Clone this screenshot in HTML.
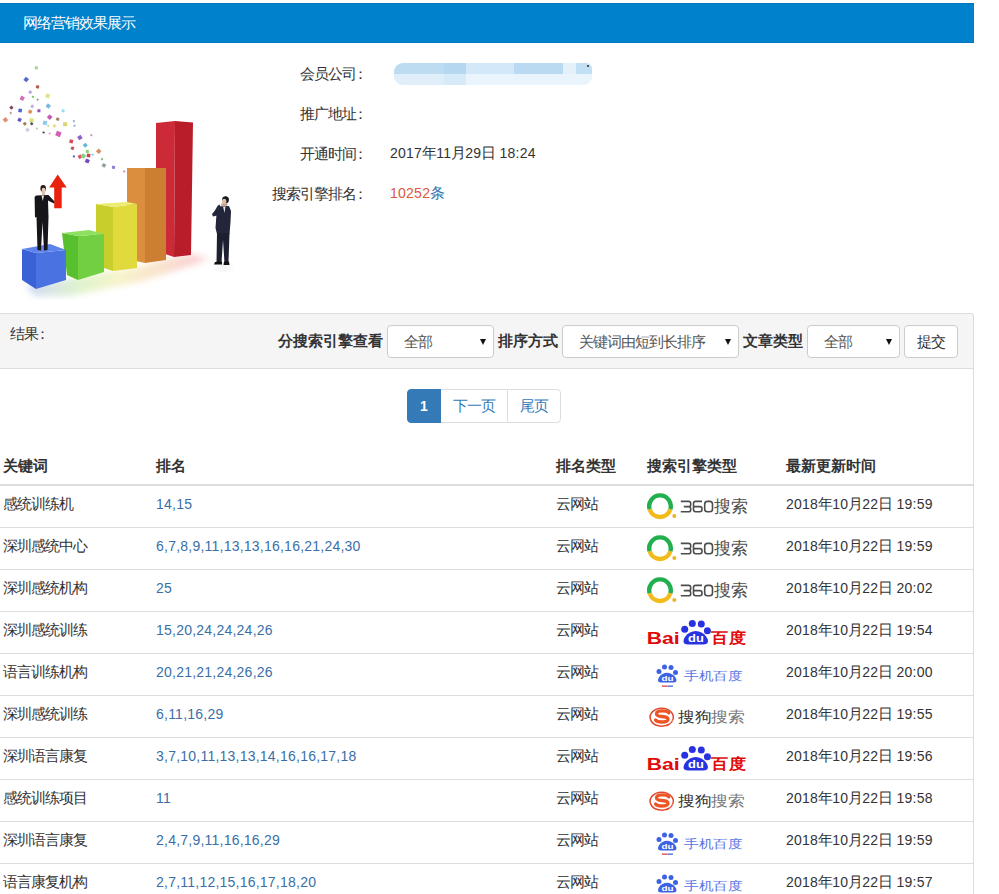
<!DOCTYPE html>
<html><head><meta charset="utf-8"><style>
*{box-sizing:border-box}
html,body{margin:0;padding:0;background:#fff;width:999px;height:894px;overflow:hidden;position:relative;font-family:"Liberation Sans",sans-serif;font-size:14px;color:#333}
.abs{position:absolute}
.hdr{position:absolute;left:0;top:3px;width:974px;height:40px;background:#0081cc;border-top:1px solid #0676bd;border-bottom:1px solid #0676bd;color:#fff;font-size:14px}
.hdr span{position:absolute;left:23px;top:9px;line-height:20px}
.lab{position:absolute;width:120px;left:250px;text-align:right;line-height:20px;white-space:nowrap}
.val{position:absolute;left:390px;line-height:20px;white-space:nowrap}
.bar{position:absolute;left:0;top:313px;width:974px;height:56px;background:#f5f5f5;border:1px solid #ddd;border-left:none;border-top-right-radius:3px}
.fl{position:absolute;font-weight:bold;font-size:15px;line-height:20px;top:331px;white-space:nowrap}
.sel{position:absolute;top:325px;height:33px;background:#fff;border:1px solid #ccc;border-radius:4px}
.sel span{position:absolute;left:16px;top:6px;line-height:20px;color:#555;font-size:14px}
.sel i{position:absolute;right:7px;top:13px;width:0;height:0;border-left:3px solid transparent;border-right:3px solid transparent;border-top:6px solid #111}
.btn{position:absolute;top:325px;left:904px;width:54px;height:33px;background:#fff;border:1px solid #ccc;border-radius:4px}
.btn span{position:absolute;left:12px;top:6px;line-height:20px;color:#333}
.pg{position:absolute;top:389px;height:34px;border:1px solid #ddd;background:#fff;color:#337ab7;line-height:20px;padding:6px 12px}
.th{position:absolute;top:456px;font-weight:bold;font-size:15px;line-height:20px;white-space:nowrap}
.hl{position:absolute;left:0;top:484px;width:973px;height:2px;background:#ddd}
.ln{position:absolute;left:0;width:973px;height:1px;background:#ddd}
.vr{position:absolute;left:973px;top:368px;width:1px;height:526px;background:#ddd}
.c{position:absolute;line-height:20px;white-space:nowrap}
.rk{color:#3a6fa8}
.lg{position:absolute;line-height:0}
i.n{font-style:normal;letter-spacing:0.25px}
b.k{font-weight:normal;font-size:15px;letter-spacing:-1px}
b.cn{position:relative;left:-3px}
</style></head><body>
<div class="hdr"><span><b class=k>网络营销效果展示</b></span></div>
<svg style="position:absolute;left:0;top:50px" width="250" height="250" viewBox="0 50 250 250">
<defs>
<radialGradient id="sh" cx="0.5" cy="0.5" r="0.5"><stop offset="0" stop-color="#e6e6e6" stop-opacity="0.8"/><stop offset="1" stop-color="#fff" stop-opacity="0"/></radialGradient>
</defs>
<linearGradient id="rfl" x1="0" x2="1"><stop offset="0" stop-color="#7a90e8"/><stop offset="0.3" stop-color="#a8e070"/><stop offset="0.5" stop-color="#e8e070"/><stop offset="0.7" stop-color="#f0b070"/><stop offset="0.9" stop-color="#f08080"/><stop offset="1" stop-color="#fff"/></linearGradient>
<filter id="bl" x="-20%" y="-50%" width="140%" height="200%"><feGaussianBlur stdDeviation="3"/></filter>
<polygon points="25,286 66,279 104,272 137,267 166,259 191,254 215,258 140,282 70,296 35,296" fill="url(#rfl)" opacity="0.35" filter="url(#bl)"/>
<ellipse cx="224" cy="267" rx="8" ry="2.5" fill="#e8e8e8" filter="url(#bl)"/>

<rect x="34.8" y="66.3" width="3" height="3" fill="#a8d08a" transform="rotate(0 36.3 67.8)"/><rect x="24.2" y="77.5" width="4" height="4" fill="#5568cc" transform="rotate(37 26.2 79.5)"/><rect x="36.1" y="85.4" width="3" height="3" fill="#b45a52" transform="rotate(14 37.6 86.9)"/><rect x="28.7" y="90.7" width="3" height="3" fill="#c0a8dc" transform="rotate(51 30.2 92.2)"/><rect x="20.2" y="96.3" width="4" height="4" fill="#d070b8" transform="rotate(28 22.2 98.3)"/><rect x="31.9" y="95.9" width="2" height="2" fill="#7cc860" transform="rotate(5 32.9 96.9)"/><rect x="36.6" y="98.6" width="2" height="2" fill="#a0a0a0" transform="rotate(42 37.6 99.6)"/><rect x="45.7" y="94.0" width="4" height="4" fill="#e2e28a" transform="rotate(19 47.7 96)"/><rect x="9.9" y="106.2" width="3" height="3" fill="#7a4a50" transform="rotate(56 11.4 107.7)"/><rect x="9.7" y="112.0" width="2" height="2" fill="#c0a090" transform="rotate(33 10.7 113)"/><rect x="18.4" y="108.7" width="3.5" height="3.5" fill="#4a66cc" transform="rotate(10 20.1 110.4)"/><rect x="30.7" y="104.8" width="3" height="3" fill="#c8b0e0" transform="rotate(47 32.2 106.3)"/><rect x="28.4" y="110.0" width="3.5" height="3.5" fill="#e0905a" transform="rotate(24 30.2 111.7)"/><rect x="37.4" y="109.3" width="3" height="3" fill="#9a50b8" transform="rotate(1 38.9 110.8)"/><rect x="46.3" y="104.0" width="4" height="4" fill="#7ab8e0" transform="rotate(38 48.3 106)"/><rect x="61.6" y="109.3" width="3" height="3" fill="#a0dcee" transform="rotate(15 63.1 110.8)"/><rect x="3.4" y="117.8" width="4" height="4" fill="#e09070" transform="rotate(52 5.4 119.8)"/><rect x="17.8" y="118.0" width="3.5" height="3.5" fill="#6a58c8" transform="rotate(29 19.5 119.8)"/><rect x="29.6" y="118.4" width="4" height="4" fill="#d8e080" transform="rotate(6 31.6 120.4)"/><rect x="47.7" y="115.1" width="4" height="4" fill="#c858b0" transform="rotate(43 49.7 117.1)"/><rect x="56.2" y="117.6" width="3" height="3" fill="#a08060" transform="rotate(20 57.7 119.1)"/><rect x="23.3" y="122.3" width="3" height="3" fill="#a08050" transform="rotate(57 24.8 123.8)"/><rect x="30.4" y="122.5" width="2.5" height="2.5" fill="#505060" transform="rotate(34 31.6 123.8)"/><rect x="43.0" y="120.9" width="4" height="4" fill="#90c8f0" transform="rotate(11 45 122.9)"/><rect x="52.9" y="124.3" width="3" height="3" fill="#e8e090" transform="rotate(48 54.4 125.8)"/><rect x="47.3" y="124.8" width="2" height="2" fill="#c0e0a0" transform="rotate(25 48.3 125.8)"/><rect x="63.1" y="122.2" width="4" height="4" fill="#d8d870" transform="rotate(2 65.1 124.2)"/><rect x="72.9" y="120.1" width="2" height="2" fill="#a0a8c8" transform="rotate(39 73.9 121.1)"/><rect x="73.5" y="124.8" width="2" height="2" fill="#a0b0d0" transform="rotate(16 74.5 125.8)"/><rect x="25.8" y="128.1" width="3.5" height="3.5" fill="#d8c8f0" transform="rotate(53 27.5 129.8)"/><rect x="35.9" y="127.5" width="2" height="2" fill="#b0d8a0" transform="rotate(30 36.9 128.5)"/><rect x="42.6" y="131.5" width="2" height="2" fill="#404040" transform="rotate(7 43.6 132.5)"/><rect x="48.7" y="132.6" width="2" height="2" fill="#e0b0d0" transform="rotate(44 49.7 133.6)"/><rect x="55.9" y="131.4" width="5" height="5" fill="#d060b8" transform="rotate(21 58.4 133.9)"/><rect x="77.9" y="135.6" width="4" height="4" fill="#9060c8" transform="rotate(58 79.9 137.6)"/><rect x="90.3" y="134.2" width="2" height="2" fill="#c0a0b0" transform="rotate(35 91.3 135.2)"/><rect x="69.5" y="139.6" width="3.5" height="3.5" fill="#d84858" transform="rotate(12 71.2 141.3)"/><rect x="83.5" y="143.6" width="3.5" height="3.5" fill="#60b8d8" transform="rotate(49 85.3 145.3)"/><rect x="71.0" y="146.7" width="3" height="3" fill="#c05050" transform="rotate(26 72.5 148.2)"/><rect x="85.8" y="149.8" width="3" height="3" fill="#90d070" transform="rotate(3 87.3 151.3)"/><rect x="96.7" y="149.3" width="4" height="4" fill="#d89060" transform="rotate(40 98.7 151.3)"/><rect x="72.9" y="155.4" width="2" height="2" fill="#5060c0" transform="rotate(17 73.9 156.4)"/><rect x="78.2" y="154.9" width="3.5" height="3.5" fill="#e05060" transform="rotate(54 79.9 156.7)"/><rect x="81.3" y="154.0" width="4" height="4" fill="#80d080" transform="rotate(31 83.3 156)"/><rect x="86.8" y="153.8" width="3.5" height="3.5" fill="#d04050" transform="rotate(8 88.6 155.6)"/><rect x="91.7" y="153.7" width="2" height="2" fill="#80d0e0" transform="rotate(45 92.7 154.7)"/><rect x="85.3" y="159.0" width="4" height="4" fill="#7050c0" transform="rotate(22 87.3 161)"/><rect x="101.0" y="158.1" width="2" height="2" fill="#80c070" transform="rotate(59 102 159.1)"/><rect x="102.2" y="163.7" width="3.5" height="3.5" fill="#90a090" transform="rotate(36 104 165.4)"/><rect x="112.0" y="165.9" width="3" height="3" fill="#9080d0" transform="rotate(13 113.5 167.4)"/><rect x="123.2" y="170.5" width="2" height="2" fill="#d0a0a0" transform="rotate(50 124.2 171.5)"/>
<polygon points="156,123 175,121 174,257 156,251" fill="#cc2a37"/>
<polygon points="175,121 193,122.5 191,255 174,257" fill="#b91d2a"/>

<polygon points="127,168 145,168 145,263 127,259" fill="#da8e3e"/>
<polygon points="145,168 166,168 166,260 145,263" fill="#cc7f33"/>

<polygon points="96,204 113,207 113,271 104,268 96,262" fill="#c8cf2c"/>
<polygon points="113,207 137,204 137,268 113,271" fill="#e0da3c"/>
<polygon points="96,204 127,202 137,204 113,207" fill="#ecec70"/>
<polygon points="62,233 78,236 78,280 67,275" fill="#58bf2e"/>
<polygon points="78,236 104,234 104,272 78,280" fill="#72cf42"/>
<polygon points="62,233 89,230 104,234 78,236" fill="#8ee060"/>
<polygon points="22,249 36,253 36,289 22,280" fill="#3a62d6"/>
<polygon points="36,253 66,250 66,280 36,289" fill="#4a72e0"/>
<polygon points="22,249 50,244 66,250 36,253" fill="#5c84ea"/>
<polygon points="57.7,174.5 66.7,187.5 61.7,187.5 61.7,208.2 54.2,208.2 54.2,187.5 49.1,187.5" fill="#e8220c"/>
<ellipse cx="43.2" cy="188.5" rx="2.8" ry="3.4" fill="#2a1e1a"/>
<ellipse cx="43.6" cy="190" rx="2" ry="2.2" fill="#e8c8b0"/>
<path d="M41.8 191 L45 191 L45 196 L41.8 196 Z" fill="#e0c0a8"/>
<path d="M36 195.5 L48.5 195 L54.5 201.5 L54 203.5 L48 200.5 L48.5 217 L47.5 250 L44 250.5 L42.5 222 L41 250.5 L37.5 250 L36.5 217 L35 217.5 L34.6 197 Z" fill="#15151a"/>
<path d="M41.5 195.5 L44 195.5 L42.8 201 Z" fill="#f0f0f0"/>
<ellipse cx="225.5" cy="199.8" rx="3.4" ry="3.6" fill="#15151a"/>
<ellipse cx="224.2" cy="201.5" rx="2.2" ry="2.8" fill="#dcc0a8"/>
<path d="M221 203.5 L227.5 203.5 L227 207 L221.5 207 Z" fill="#c8a890"/>
<path d="M219.5 206.5 L229 206 L231 211 L230.5 222 L229.5 234 L217 234 L215.5 228 L216.5 214 Z" fill="#23263a"/>
<path d="M223 206.5 L225.5 206.5 L224.5 213 Z" fill="#e8e8ee"/>
<path d="M216.5 209 L212 214 L213 216.5 L219 215 L218.5 209 Z" fill="#23263a"/>
<path d="M213 214 L217.5 206 L219.5 204.5 L220.5 206.5 L218 210 Z" fill="#23263a"/>
<path d="M217 233 L229.5 233 L228.5 262 L224.5 263 L223 240 L221.5 263 L216.5 262.5 Z" fill="#1e2030"/>
<path d="M215 262 L222 261.5 L222 264.5 L214 264.5 Z M224 261.5 L229 261.5 L229.5 265 L223.5 265 Z" fill="#111"/>
</svg>
<div class="lab" style="top:64px"><b class=k>会员公司</b><b class="k cn">：</b></div>
<div class="abs" style="left:394px;top:63px;width:198px;height:22px;border-radius:9px 6px 9px 9px;overflow:hidden;background:#e6f1fa;filter:blur(0.6px)">
<div class="abs" style="left:0;top:0;width:50px;height:11px;background:#bddcf2"></div>
<div class="abs" style="left:50px;top:0;width:22px;height:11px;background:#b5d7f0"></div>
<div class="abs" style="left:72px;top:0;width:48px;height:11px;background:#d3e8f8"></div>
<div class="abs" style="left:120px;top:0;width:49px;height:11px;background:#b9daf1"></div>
<div class="abs" style="left:169px;top:0;width:13px;height:11px;background:#e4f1fb"></div>
<div class="abs" style="left:182px;top:0;width:16px;height:11px;background:#c3dff3"></div>
<div class="abs" style="left:0;top:11px;width:50px;height:11px;background:#e0eef9"></div>
<div class="abs" style="left:50px;top:11px;width:22px;height:11px;background:#d7eaf7"></div>
<div class="abs" style="left:72px;top:11px;width:126px;height:11px;background:#eaf4fc"></div>
</div><div class="abs" style="left:587px;top:65px;width:2px;height:2px;background:#555"></div>
<div class="lab" style="top:104px"><b class=k>推广地址</b><b class="k cn">：</b></div>
<div class="lab" style="top:144px"><b class=k>开通时间</b><b class="k cn">：</b></div>
<div class="val" style="top:143px"><i class=n>2017</i><b class=k>年</b><i class=n>11</i><b class=k>月</b><i class=n>29</i><b class=k>日</b><i class=n> 18:24</i></div>
<div class="lab" style="top:184px"><b class=k>搜索引擎排名</b><b class="k cn">：</b></div>
<div class="val" style="top:183px"><span style="color:#dd5838;letter-spacing:0.25px">10252</span><span style="color:#3479b0"><b class=k>条</b></span></div>

<div class="bar"></div>
<div class="vr"></div>
<div class="c" style="left:10px;top:324px"><b class=k>结果</b><b class="k cn">：</b></div>
<div class="fl" style="left:278px">分搜索引擎查看</div>
<div class="sel" style="left:387px;width:107px"><span><b class=k>全部</b></span><i></i></div>
<div class="fl" style="left:498px">排序方式</div>
<div class="sel" style="left:562px;width:177px"><span><b class=k>关键词由短到长排序</b></span><i></i></div>
<div class="fl" style="left:743px">文章类型</div>
<div class="sel" style="left:807px;width:93px"><span><b class=k>全部</b></span><i></i></div>
<div class="btn"><span><b class=k>提交</b></span></div>

<div class="pg" style="left:407px;width:35px;background:#337ab7;border-color:#337ab7;color:#fff;font-weight:bold;border-radius:4px 0 0 4px">1</div>
<div class="pg" style="left:441px;width:67px;border-left:none"><b class=k>下一页</b></div>
<div class="pg" style="left:507px;width:54px;border-radius:0 4px 4px 0"><b class=k>尾页</b></div>

<div class="th" style="left:3px">关键词</div>
<div class="th" style="left:156px">排名</div>
<div class="th" style="left:556px">排名类型</div>
<div class="th" style="left:647px">搜索引擎类型</div>
<div class="th" style="left:786px">最新更新时间</div>
<div class="hl"></div>
<div class="ln" style="top:527px"></div>
<div class="c" style="top:494px;left:3px"><b class=k>感统训练机</b></div><div class="c rk" style="top:494px;left:156px;letter-spacing:0.23px">14,15</div><div class="c" style="top:494px;left:556px"><b class=k>云网站</b></div><div class="lg" style="top:485px;left:647px"><svg width="110" height="42" viewBox="0 0 110 42"><path d="M23.375 24.2 A10.8 10.8 0 0 1 2.625 24.2" fill="none" stroke="#f3ba1c" stroke-width="4.4"/><path d="M2.625 24.2 A10.8 10.8 0 1 1 23.375 24.2" fill="none" stroke="#22b04f" stroke-width="4.4"/><circle cx="27.3" cy="30.9" r="2" fill="#eab42a"/><g fill="none" stroke="#4d4d4d" stroke-width="1.6"><path d="M33.8 16.4 H41.6 Q43.7 16.4 43.7 18.5 V19.4 Q43.7 21.6 41.6 21.6 H36.8 M41.6 21.6 Q43.7 21.6 43.7 23.7 V24.7 Q43.7 26.8 41.6 26.8 H33.8"/><path d="M55 16.4 H48.7 Q46.5 16.4 46.5 18.6 V24.6 Q46.5 26.8 48.7 26.8 H52.8 Q55 26.8 55 24.6 V23.8 Q55 21.6 52.8 21.6 H46.5"/><path d="M60.5 16.4 H62.7 Q65.5 16.4 65.5 19.2 V24 Q65.5 26.8 62.7 26.8 H60.5 Q57.7 26.8 57.7 24 V19.2 Q57.7 16.4 60.5 16.4Z"/></g><text x="67.4" y="27.4" font-size="17" fill="#4d4d4d">搜索</text></svg></div><div class="c" style="top:494px;left:786px"><i class=n>2018</i><b class=k>年</b><i class=n>10</i><b class=k>月</b><i class=n>22</i><b class=k>日</b><i class=n> 19:59</i></div>
<div class="ln" style="top:569px"></div>
<div class="c" style="top:536px;left:3px"><b class=k>深圳感统中心</b></div><div class="c rk" style="top:536px;left:156px;letter-spacing:0.23px">6,7,8,9,11,13,13,16,16,21,24,30</div><div class="c" style="top:536px;left:556px"><b class=k>云网站</b></div><div class="lg" style="top:527px;left:647px"><svg width="110" height="42" viewBox="0 0 110 42"><path d="M23.375 24.2 A10.8 10.8 0 0 1 2.625 24.2" fill="none" stroke="#f3ba1c" stroke-width="4.4"/><path d="M2.625 24.2 A10.8 10.8 0 1 1 23.375 24.2" fill="none" stroke="#22b04f" stroke-width="4.4"/><circle cx="27.3" cy="30.9" r="2" fill="#eab42a"/><g fill="none" stroke="#4d4d4d" stroke-width="1.6"><path d="M33.8 16.4 H41.6 Q43.7 16.4 43.7 18.5 V19.4 Q43.7 21.6 41.6 21.6 H36.8 M41.6 21.6 Q43.7 21.6 43.7 23.7 V24.7 Q43.7 26.8 41.6 26.8 H33.8"/><path d="M55 16.4 H48.7 Q46.5 16.4 46.5 18.6 V24.6 Q46.5 26.8 48.7 26.8 H52.8 Q55 26.8 55 24.6 V23.8 Q55 21.6 52.8 21.6 H46.5"/><path d="M60.5 16.4 H62.7 Q65.5 16.4 65.5 19.2 V24 Q65.5 26.8 62.7 26.8 H60.5 Q57.7 26.8 57.7 24 V19.2 Q57.7 16.4 60.5 16.4Z"/></g><text x="67.4" y="27.4" font-size="17" fill="#4d4d4d">搜索</text></svg></div><div class="c" style="top:536px;left:786px"><i class=n>2018</i><b class=k>年</b><i class=n>10</i><b class=k>月</b><i class=n>22</i><b class=k>日</b><i class=n> 19:59</i></div>
<div class="ln" style="top:611px"></div>
<div class="c" style="top:578px;left:3px"><b class=k>深圳感统机构</b></div><div class="c rk" style="top:578px;left:156px;letter-spacing:0.23px">25</div><div class="c" style="top:578px;left:556px"><b class=k>云网站</b></div><div class="lg" style="top:569px;left:647px"><svg width="110" height="42" viewBox="0 0 110 42"><path d="M23.375 24.2 A10.8 10.8 0 0 1 2.625 24.2" fill="none" stroke="#f3ba1c" stroke-width="4.4"/><path d="M2.625 24.2 A10.8 10.8 0 1 1 23.375 24.2" fill="none" stroke="#22b04f" stroke-width="4.4"/><circle cx="27.3" cy="30.9" r="2" fill="#eab42a"/><g fill="none" stroke="#4d4d4d" stroke-width="1.6"><path d="M33.8 16.4 H41.6 Q43.7 16.4 43.7 18.5 V19.4 Q43.7 21.6 41.6 21.6 H36.8 M41.6 21.6 Q43.7 21.6 43.7 23.7 V24.7 Q43.7 26.8 41.6 26.8 H33.8"/><path d="M55 16.4 H48.7 Q46.5 16.4 46.5 18.6 V24.6 Q46.5 26.8 48.7 26.8 H52.8 Q55 26.8 55 24.6 V23.8 Q55 21.6 52.8 21.6 H46.5"/><path d="M60.5 16.4 H62.7 Q65.5 16.4 65.5 19.2 V24 Q65.5 26.8 62.7 26.8 H60.5 Q57.7 26.8 57.7 24 V19.2 Q57.7 16.4 60.5 16.4Z"/></g><text x="67.4" y="27.4" font-size="17" fill="#4d4d4d">搜索</text></svg></div><div class="c" style="top:578px;left:786px"><i class=n>2018</i><b class=k>年</b><i class=n>10</i><b class=k>月</b><i class=n>22</i><b class=k>日</b><i class=n> 20:02</i></div>
<div class="ln" style="top:653px"></div>
<div class="c" style="top:620px;left:3px"><b class=k>深圳感统训练</b></div><div class="c rk" style="top:620px;left:156px;letter-spacing:0.23px">15,20,24,24,24,26</div><div class="c" style="top:620px;left:556px"><b class=k>云网站</b></div><div class="lg" style="top:611px;left:647px"><svg width="110" height="42" viewBox="0 0 110 42"><text x="-0.3" y="32.8" font-size="16.3" font-weight="bold" fill="#e10a0a" font-family="Liberation Sans" textLength="33" lengthAdjust="spacingAndGlyphs">Bai</text><g fill="#2932e1"><circle cx="37.7" cy="18.3" r="3.5"/><circle cx="45.3" cy="12.6" r="3.5"/><circle cx="54.3" cy="12.9" r="3.5"/><circle cx="60.4" cy="19.8" r="3.5"/><path d="M36.5 30 Q37 25 43 21.5 Q48.7 18.5 54.5 21.5 Q60.5 25 61 30 Q61 33.5 56 33.5 L41.5 33.5 Q36.3 33.5 36.5 30Z"/></g><text x="41" y="31.2" font-size="10" font-weight="bold" fill="#fff" font-family="Liberation Sans" textLength="15.8" lengthAdjust="spacingAndGlyphs">du</text><text x="64.5" y="32" font-size="14" font-weight="bold" fill="#e10a0a" textLength="35.5" lengthAdjust="spacingAndGlyphs" transform="translate(0 -2.6) scale(1 1.08)">百度</text></svg></div><div class="c" style="top:620px;left:786px"><i class=n>2018</i><b class=k>年</b><i class=n>10</i><b class=k>月</b><i class=n>22</i><b class=k>日</b><i class=n> 19:54</i></div>
<div class="ln" style="top:695px"></div>
<div class="c" style="top:662px;left:3px"><b class=k>语言训练机构</b></div><div class="c rk" style="top:662px;left:156px;letter-spacing:0.23px">20,21,21,24,26,26</div><div class="c" style="top:662px;left:556px"><b class=k>云网站</b></div><div class="lg" style="top:653px;left:647px"><svg width="110" height="42" viewBox="0 0 110 42"><g fill="#3d62e6"><circle cx="12" cy="18.5" r="2.5"/><circle cx="17.5" cy="14" r="2.5"/><circle cx="24" cy="14.5" r="2.5"/><circle cx="28.5" cy="19.5" r="2.5"/><path d="M11 27 Q11.5 23.5 15.5 21 Q20 18.5 24.5 21 Q29 23.5 29.5 27 Q29.5 29.5 26.5 29.5 L14 29.5 Q11 29.5 11 27Z"/></g><text x="14.5" y="28.2" font-size="7.5" font-weight="bold" fill="#fff" font-family="Liberation Sans" textLength="12" lengthAdjust="spacingAndGlyphs">du</text><rect x="15" y="32.5" width="5.5" height="1.3" fill="#d9424a"/><rect x="20.5" y="32.5" width="5.5" height="1.3" fill="#4a6ad8"/><text x="37" y="26.5" font-size="12" fill="#5a72e6" textLength="58.5" lengthAdjust="spacingAndGlyphs">手机百度</text></svg></div><div class="c" style="top:662px;left:786px"><i class=n>2018</i><b class=k>年</b><i class=n>10</i><b class=k>月</b><i class=n>22</i><b class=k>日</b><i class=n> 20:00</i></div>
<div class="ln" style="top:737px"></div>
<div class="c" style="top:704px;left:3px"><b class=k>深圳感统训练</b></div><div class="c rk" style="top:704px;left:156px;letter-spacing:0.23px">6,11,16,29</div><div class="c" style="top:704px;left:556px"><b class=k>云网站</b></div><div class="lg" style="top:695px;left:647px"><svg width="110" height="42" viewBox="0 0 110 42"><path d="M22 29.2 A11.6 9 0 1 1 25.5 25.5" fill="none" stroke="#e2492c" stroke-width="1.5"/><path d="M25.5 25.5 Q24 29 19 31" fill="none" stroke="#e2492c" stroke-width="1.2"/><path d="M21.8 17.8 Q20.5 15.8 15.5 15.8 Q9.5 15.8 9.5 18.8 Q9.5 21.2 15 21.5 Q21 21.9 21 24.2 Q21 27 14.5 27 Q10 27 8.5 25" fill="none" stroke="#ee5524" stroke-width="3.3" stroke-linecap="round"/><text x="31.1" y="26.8" font-size="15" fill="#333" textLength="33.4" lengthAdjust="spacingAndGlyphs">搜狗</text><text x="64.2" y="26.8" font-size="15" fill="#777" textLength="33.7" lengthAdjust="spacingAndGlyphs">搜索</text></svg></div><div class="c" style="top:704px;left:786px"><i class=n>2018</i><b class=k>年</b><i class=n>10</i><b class=k>月</b><i class=n>22</i><b class=k>日</b><i class=n> 19:55</i></div>
<div class="ln" style="top:779px"></div>
<div class="c" style="top:746px;left:3px"><b class=k>深圳语言康复</b></div><div class="c rk" style="top:746px;left:156px;letter-spacing:0.23px">3,7,10,11,13,13,14,16,16,17,18</div><div class="c" style="top:746px;left:556px"><b class=k>云网站</b></div><div class="lg" style="top:737px;left:647px"><svg width="110" height="42" viewBox="0 0 110 42"><text x="-0.3" y="32.8" font-size="16.3" font-weight="bold" fill="#e10a0a" font-family="Liberation Sans" textLength="33" lengthAdjust="spacingAndGlyphs">Bai</text><g fill="#2932e1"><circle cx="37.7" cy="18.3" r="3.5"/><circle cx="45.3" cy="12.6" r="3.5"/><circle cx="54.3" cy="12.9" r="3.5"/><circle cx="60.4" cy="19.8" r="3.5"/><path d="M36.5 30 Q37 25 43 21.5 Q48.7 18.5 54.5 21.5 Q60.5 25 61 30 Q61 33.5 56 33.5 L41.5 33.5 Q36.3 33.5 36.5 30Z"/></g><text x="41" y="31.2" font-size="10" font-weight="bold" fill="#fff" font-family="Liberation Sans" textLength="15.8" lengthAdjust="spacingAndGlyphs">du</text><text x="64.5" y="32" font-size="14" font-weight="bold" fill="#e10a0a" textLength="35.5" lengthAdjust="spacingAndGlyphs" transform="translate(0 -2.6) scale(1 1.08)">百度</text></svg></div><div class="c" style="top:746px;left:786px"><i class=n>2018</i><b class=k>年</b><i class=n>10</i><b class=k>月</b><i class=n>22</i><b class=k>日</b><i class=n> 19:56</i></div>
<div class="ln" style="top:821px"></div>
<div class="c" style="top:788px;left:3px"><b class=k>感统训练项目</b></div><div class="c rk" style="top:788px;left:156px;letter-spacing:0.23px">11</div><div class="c" style="top:788px;left:556px"><b class=k>云网站</b></div><div class="lg" style="top:779px;left:647px"><svg width="110" height="42" viewBox="0 0 110 42"><path d="M22 29.2 A11.6 9 0 1 1 25.5 25.5" fill="none" stroke="#e2492c" stroke-width="1.5"/><path d="M25.5 25.5 Q24 29 19 31" fill="none" stroke="#e2492c" stroke-width="1.2"/><path d="M21.8 17.8 Q20.5 15.8 15.5 15.8 Q9.5 15.8 9.5 18.8 Q9.5 21.2 15 21.5 Q21 21.9 21 24.2 Q21 27 14.5 27 Q10 27 8.5 25" fill="none" stroke="#ee5524" stroke-width="3.3" stroke-linecap="round"/><text x="31.1" y="26.8" font-size="15" fill="#333" textLength="33.4" lengthAdjust="spacingAndGlyphs">搜狗</text><text x="64.2" y="26.8" font-size="15" fill="#777" textLength="33.7" lengthAdjust="spacingAndGlyphs">搜索</text></svg></div><div class="c" style="top:788px;left:786px"><i class=n>2018</i><b class=k>年</b><i class=n>10</i><b class=k>月</b><i class=n>22</i><b class=k>日</b><i class=n> 19:58</i></div>
<div class="ln" style="top:863px"></div>
<div class="c" style="top:830px;left:3px"><b class=k>深圳语言康复</b></div><div class="c rk" style="top:830px;left:156px;letter-spacing:0.23px">2,4,7,9,11,16,16,29</div><div class="c" style="top:830px;left:556px"><b class=k>云网站</b></div><div class="lg" style="top:821px;left:647px"><svg width="110" height="42" viewBox="0 0 110 42"><g fill="#3d62e6"><circle cx="12" cy="18.5" r="2.5"/><circle cx="17.5" cy="14" r="2.5"/><circle cx="24" cy="14.5" r="2.5"/><circle cx="28.5" cy="19.5" r="2.5"/><path d="M11 27 Q11.5 23.5 15.5 21 Q20 18.5 24.5 21 Q29 23.5 29.5 27 Q29.5 29.5 26.5 29.5 L14 29.5 Q11 29.5 11 27Z"/></g><text x="14.5" y="28.2" font-size="7.5" font-weight="bold" fill="#fff" font-family="Liberation Sans" textLength="12" lengthAdjust="spacingAndGlyphs">du</text><rect x="15" y="32.5" width="5.5" height="1.3" fill="#d9424a"/><rect x="20.5" y="32.5" width="5.5" height="1.3" fill="#4a6ad8"/><text x="37" y="26.5" font-size="12" fill="#5a72e6" textLength="58.5" lengthAdjust="spacingAndGlyphs">手机百度</text></svg></div><div class="c" style="top:830px;left:786px"><i class=n>2018</i><b class=k>年</b><i class=n>10</i><b class=k>月</b><i class=n>22</i><b class=k>日</b><i class=n> 19:59</i></div>
<div class="ln" style="top:905px"></div>
<div class="c" style="top:872px;left:3px"><b class=k>语言康复机构</b></div><div class="c rk" style="top:872px;left:156px;letter-spacing:0.23px">2,7,11,12,15,16,17,18,20</div><div class="c" style="top:872px;left:556px"><b class=k>云网站</b></div><div class="lg" style="top:863px;left:647px"><svg width="110" height="42" viewBox="0 0 110 42"><g fill="#3d62e6"><circle cx="12" cy="18.5" r="2.5"/><circle cx="17.5" cy="14" r="2.5"/><circle cx="24" cy="14.5" r="2.5"/><circle cx="28.5" cy="19.5" r="2.5"/><path d="M11 27 Q11.5 23.5 15.5 21 Q20 18.5 24.5 21 Q29 23.5 29.5 27 Q29.5 29.5 26.5 29.5 L14 29.5 Q11 29.5 11 27Z"/></g><text x="14.5" y="28.2" font-size="7.5" font-weight="bold" fill="#fff" font-family="Liberation Sans" textLength="12" lengthAdjust="spacingAndGlyphs">du</text><rect x="15" y="32.5" width="5.5" height="1.3" fill="#d9424a"/><rect x="20.5" y="32.5" width="5.5" height="1.3" fill="#4a6ad8"/><text x="37" y="26.5" font-size="12" fill="#5a72e6" textLength="58.5" lengthAdjust="spacingAndGlyphs">手机百度</text></svg></div><div class="c" style="top:872px;left:786px"><i class=n>2018</i><b class=k>年</b><i class=n>10</i><b class=k>月</b><i class=n>22</i><b class=k>日</b><i class=n> 19:57</i></div>
</body></html>
